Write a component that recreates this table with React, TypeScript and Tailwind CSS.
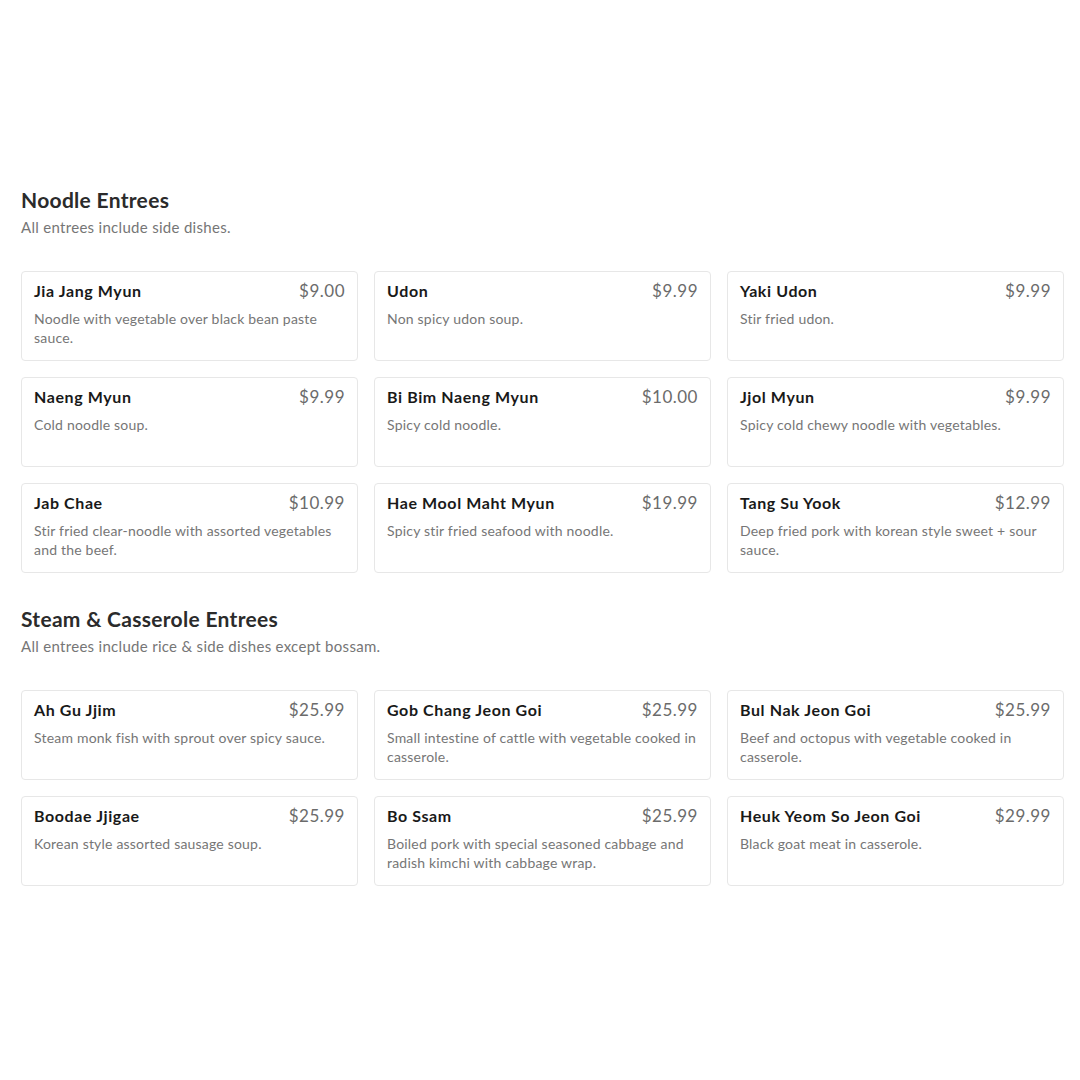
const sections = [
  {
    title: "Noodle Entrees",
    note: "All entrees include side dishes.",
    items: [
      { name: "Jia Jang Myun", price: "$9.00", desc: "Noodle with vegetable over black bean paste sauce." },
      { name: "Udon", price: "$9.99", desc: "Non spicy udon soup." },
      { name: "Yaki Udon", price: "$9.99", desc: "Stir fried udon." },
      { name: "Naeng Myun", price: "$9.99", desc: "Cold noodle soup." },
      { name: "Bi Bim Naeng Myun", price: "$10.00", desc: "Spicy cold noodle." },
      { name: "Jjol Myun", price: "$9.99", desc: "Spicy cold chewy noodle with vegetables." },
      { name: "Jab Chae", price: "$10.99", desc: "Stir fried clear-noodle with assorted vegetables and the beef." },
      { name: "Hae Mool Maht Myun", price: "$19.99", desc: "Spicy stir fried seafood with noodle." },
      { name: "Tang Su Yook", price: "$12.99", desc: "Deep fried pork with korean style sweet + sour sauce." },
    ],
  },
  {
    title: "Steam & Casserole Entrees",
    note: "All entrees include rice & side dishes except bossam.",
    items: [
      { name: "Ah Gu Jjim", price: "$25.99", desc: "Steam monk fish with sprout over spicy sauce." },
      { name: "Gob Chang Jeon Goi", price: "$25.99", desc: "Small intestine of cattle with vegetable cooked in casserole." },
      { name: "Bul Nak Jeon Goi", price: "$25.99", desc: "Beef and octopus with vegetable cooked in casserole." },
      { name: "Boodae Jjigae", price: "$25.99", desc: "Korean style assorted sausage soup." },
      { name: "Bo Ssam", price: "$25.99", desc: "Boiled pork with special seasoned cabbage and radish kimchi with cabbage wrap." },
      { name: "Heuk Yeom So Jeon Goi", price: "$29.99", desc: "Black goat meat in casserole." },
    ],
  },
];

const App = () => {
  return (
    <div className="min-h-[1080px] bg-white pt-[187px] pl-[21px] font-['Lato','Liberation_Sans',sans-serif]">
      <div className="w-[1043px] flex flex-col gap-[33px]">
        {sections.map((section) => (
          <section key={section.title}>
            <h2 className="text-[21px] leading-[26px] font-bold tracking-[0.3px] text-[#2b2b2b]">{section.title}</h2>
            <p className="mt-[4px] text-[15px] leading-[20px] tracking-[0.3px] text-[#767676]">{section.note}</p>
            <div className="mt-[34px] grid grid-cols-3 gap-x-[16px] gap-y-[16px]">
              {section.items.map((item) => (
                <div
                  key={item.name}
                  className="h-[90px] rounded-[4px] border border-[#e7e7e7] px-[12px] pt-[9px]"
                >
                  <div className="flex items-start justify-between">
                    <span className="text-[16px] leading-[20px] font-bold tracking-[0.6px] text-[#191919]">{item.name}</span>
                    <span className="text-[17px] leading-[20px] tracking-[0.5px] text-[#6b6b6b]">{item.price}</span>
                  </div>
                  <p className="mt-[8px] text-[14px] leading-[19px] tracking-[0.2px] text-[#767676]">{item.desc}</p>
                </div>
              ))}
            </div>
          </section>
        ))}
      </div>
    </div>
  );
};

export default App;
